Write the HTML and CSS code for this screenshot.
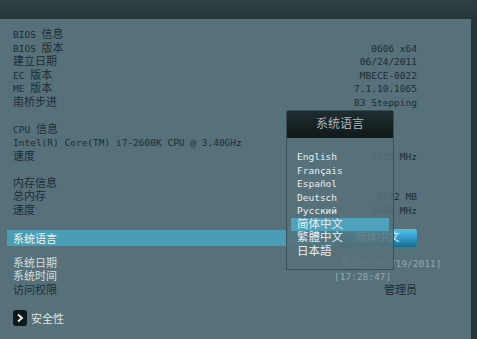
FILE: index.html
```html
<!DOCTYPE html>
<html lang="zh-CN">
<head>
<meta charset="UTF-8">
<meta name="viewport" content="width=device-width, initial-scale=1.0">
<title>主菜单</title>
<link rel="stylesheet" href="styles.css">
</head>
<body>
    <div class="top"></div>
    <div class="main">
        <div class="panel">
            <div class="group">
                <div class="row"><span><span class="m">BIOS </span>信息</span></div>
                <div class="row"><span><span class="m">BIOS </span>版本</span><span class="m">0606 x64</span></div>
                <div class="row"><span>建立日期</span><span class="m">06/24/2011</span></div>
                <div class="row"><span><span class="m">EC </span>版本</span><span class="m">MBECE-0022</span></div>
                <div class="row"><span><span class="m">ME </span>版本</span><span class="m">7.1.10.1065</span></div>
                <div class="row"><span>南桥步进</span><span class="m">B3 Stepping</span></div>
            </div>
            <div class="group">
                <div class="row"><span><span class="m">CPU </span>信息</span></div>
                <div class="row"><span class="m">Intel(R) Core(TM) i7-2600K CPU @ 3.40GHz</span></div>
                <div class="row"><span>速度</span><span class="m">3426 MHz</span></div>
            </div>
            <div class="group g3">
                <div class="row"><span>内存信息</span></div>
                <div class="row"><span>总内存</span><span class="m">8192 MB</span></div>
                <div class="row"><span>速度</span><span class="m">1600 MHz</span></div>
            </div>
            <div class="sel">
                <span>系统语言</span>
                <span class="btn">简体中文</span>
            </div>
            <div class="group g4">
                <div class="row"><span class="k light">系统日期</span><span class="dim"><span class="m">[</span>星期一<span class="m"> 09/19/2011]</span></span></div>
                <div class="row"><span class="k light">系统时间</span><span class="dim m">[17:28:47]</span></div>
                <div class="row"><span>访问权限</span><span>管理员</span></div>
            </div>
            <div class="sec">
                <span class="ico">
                    <svg width="14" height="16" viewBox="0 0 14 16"><path d="M5 4.5 L9 8 L5 11.5" fill="none" stroke="#f2f6f7" stroke-width="1.8"/></svg>
                </span>
                <span>安全性</span>
            </div>

            <div class="pop">
                <div class="pop-h">系统语言</div>
                <div class="pop-list">
                    <div class="opt m">English</div>
                    <div class="opt m">Français</div>
                    <div class="opt m">Español</div>
                    <div class="opt m">Deutsch</div>
                    <div class="opt m">Русский</div>
                    <div class="opt on">简体中文</div>
                    <div class="opt">繁體中文</div>
                    <div class="opt">日本語</div>
                </div>
            </div>
        </div>
        <div class="side"></div>
    </div>
</body>
</html>
```

FILE: styles.css
```css
body {
    margin: 0;
    width: 477px;
    height: 339px;
    overflow: hidden;
    background-color: #22363a;
    font-family: "DejaVu Sans Mono", "Noto Sans CJK SC", monospace;
    font-size: 11px;
    color: #1e2d32;
}
.m {
    font-size: 9.5px;
}
.top {
    height: 19px;
    background: linear-gradient(#2d4145, #243639);
}
.main {
    display: flex;
    height: 320px;
}
.panel {
    position: relative;
    width: 471px;
    box-sizing: border-box;
    padding: 9px 54px 0 7px;
    background-color: #56717a;
}
.side {
    flex: 1;
    background-color: #23373b;
}
.group {
    margin-bottom: 13.5px;
}
.group.g3 {
    margin-bottom: 12.75px;
}
.group.g4 {
    margin-bottom: 12.75px;
}
.row {
    display: flex;
    justify-content: space-between;
    height: 13.5px;
    line-height: 13.5px;
    padding-left: 6px;
    white-space: nowrap;
}
.row .k {
    flex-shrink: 0;
    width: 321px;
}
.light {
    color: #d6dfe1;
}
.dim {
    flex-shrink: 0;
    color: #93a8ad;
    margin-right: auto;
}
.sel {
    display: flex;
    justify-content: space-between;
    align-items: center;
    height: 16px;
    margin-bottom: 10.75px;
    padding-left: 6px;
    background-color: #4b9db5;
    color: #eef4f6;
}
.btn {
    width: 79px;
    height: 18px;
    line-height: 18px;
    text-align: center;
    border-radius: 3px;
    background: linear-gradient(#4fc3ec, #2e97c3 55%, #196a8c);
    color: #eaf3f6;
}
.sec {
    display: flex;
    align-items: center;
    gap: 4px;
    height: 16px;
    padding-left: 6px;
    color: #dfe6e8;
}
.ico {
    display: flex;
    width: 14px;
    height: 16px;
    border-radius: 3px;
    background-color: #0e191c;
}
.pop {
    position: absolute;
    left: 286px;
    top: 91px;
    width: 108px;
    height: 160px;
    box-sizing: border-box;
    border: 1px solid rgba(35, 52, 57, 0.55);
    border-radius: 3px 3px 0 0;
    background-color: rgba(86, 113, 121, 0.87);
}
.pop-h {
    height: 27px;
    line-height: 27px;
    text-align: center;
    font-size: 12px;
    color: #aab6b9;
    background: linear-gradient(#202d30, #10181a);
}
.pop-list {
    padding: 12px 4px 0;
}
.opt {
    height: 13.5px;
    line-height: 13.5px;
    padding-left: 6px;
    font-size: 11.5px;
    color: #e8eef0;
    white-space: nowrap;
}
.opt.m {
    font-size: 9.5px;
}
.opt.on {
    background-color: #4ea2bb;
}
```
